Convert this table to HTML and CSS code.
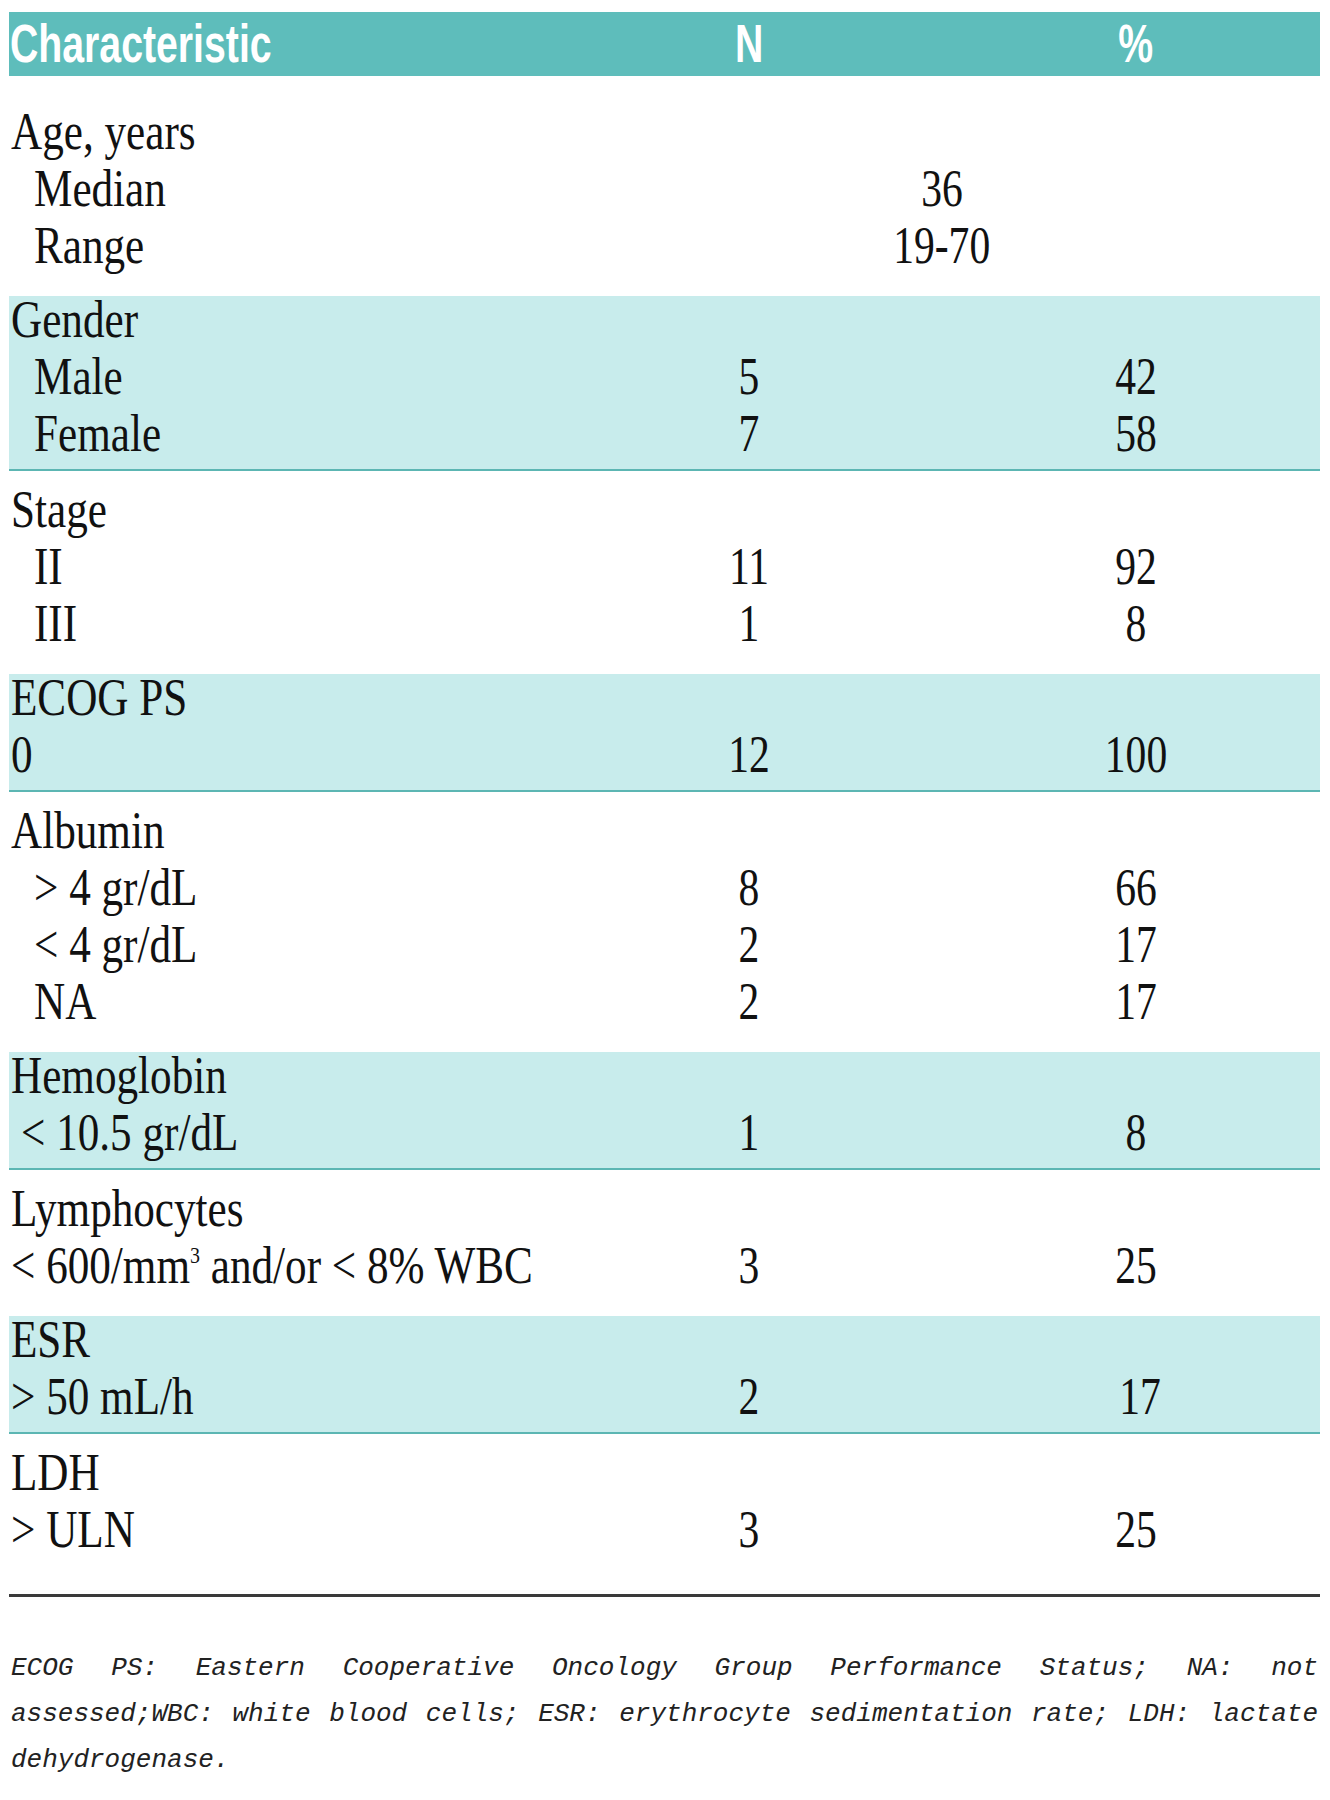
FILE: index.html
```html
<!DOCTYPE html>
<html lang="en">
<head>
<meta charset="utf-8">
<title>Patient characteristics</title>
<link rel="stylesheet" href="styles.css">
</head>
<body>
<div class="page">
  <div class="table">
    <div class="head">
      <div class="cell lab"><span class="sq">Characteristic</span></div>
      <div class="cell num"><span class="sq">N</span></div>
      <div class="cell pct"><span class="sq">%</span></div>
    </div>

    <div class="group plain first">
      <div class="row"><div class="cell lab"><span class="t">Age, years</span></div></div>
      <div class="row"><div class="cell lab ind"><span class="t">Median</span></div><div class="cell span"><span class="t">36</span></div></div>
      <div class="row"><div class="cell lab ind"><span class="t">Range</span></div><div class="cell span"><span class="t">19-70</span></div></div>
    </div>

    <div class="group band">
      <div class="row"><div class="cell lab"><span class="t">Gender</span></div></div>
      <div class="row"><div class="cell lab ind"><span class="t">Male</span></div><div class="cell num"><span class="t">5</span></div><div class="cell pct"><span class="t">42</span></div></div>
      <div class="row"><div class="cell lab ind"><span class="t">Female</span></div><div class="cell num"><span class="t">7</span></div><div class="cell pct"><span class="t">58</span></div></div>
    </div>

    <div class="group plain">
      <div class="row"><div class="cell lab"><span class="t">Stage</span></div></div>
      <div class="row"><div class="cell lab ind"><span class="t">II</span></div><div class="cell num"><span class="t">11</span></div><div class="cell pct"><span class="t">92</span></div></div>
      <div class="row"><div class="cell lab ind"><span class="t">III</span></div><div class="cell num"><span class="t">1</span></div><div class="cell pct"><span class="t">8</span></div></div>
    </div>

    <div class="group band">
      <div class="row"><div class="cell lab"><span class="t">ECOG PS</span></div></div>
      <div class="row"><div class="cell lab"><span class="t">0</span></div><div class="cell num"><span class="t">12</span></div><div class="cell pct"><span class="t">100</span></div></div>
    </div>

    <div class="group plain">
      <div class="row"><div class="cell lab"><span class="t">Albumin</span></div></div>
      <div class="row"><div class="cell lab ind"><span class="t">&gt; 4 gr/dL</span></div><div class="cell num"><span class="t">8</span></div><div class="cell pct"><span class="t">66</span></div></div>
      <div class="row"><div class="cell lab ind"><span class="t">&lt; 4 gr/dL</span></div><div class="cell num"><span class="t">2</span></div><div class="cell pct"><span class="t">17</span></div></div>
      <div class="row"><div class="cell lab ind"><span class="t">NA</span></div><div class="cell num"><span class="t">2</span></div><div class="cell pct"><span class="t">17</span></div></div>
    </div>

    <div class="group band">
      <div class="row"><div class="cell lab"><span class="t">Hemoglobin</span></div></div>
      <div class="row"><div class="cell lab ind-sm"><span class="t">&lt; 10.5 gr/dL</span></div><div class="cell num"><span class="t">1</span></div><div class="cell pct"><span class="t">8</span></div></div>
    </div>

    <div class="group plain">
      <div class="row"><div class="cell lab"><span class="t">Lymphocytes</span></div></div>
      <div class="row"><div class="cell lab"><span class="t">&lt; 600/mm<sup>3</sup> and/or &lt; 8% WBC</span></div><div class="cell num"><span class="t">3</span></div><div class="cell pct"><span class="t">25</span></div></div>
    </div>

    <div class="group band">
      <div class="row"><div class="cell lab"><span class="t">ESR</span></div></div>
      <div class="row"><div class="cell lab"><span class="t">&gt; 50 mL/h</span></div><div class="cell num"><span class="t">2</span></div><div class="cell pct nudge"><span class="t">17</span></div></div>
    </div>

    <div class="group plain">
      <div class="row"><div class="cell lab"><span class="t">LDH</span></div></div>
      <div class="row"><div class="cell lab"><span class="t">&gt; ULN</span></div><div class="cell num"><span class="t">3</span></div><div class="cell pct"><span class="t">25</span></div></div>
    </div>
  </div>

  <div class="rule"></div>

  <p class="note">ECOG PS: Eastern Cooperative Oncology Group Performance Status; NA: not assessed;WBC: white blood cells; ESR: erythrocyte sedimentation rate; LDH: lactate dehydrogenase.</p>
</div>
</body>
</html>
```

FILE: styles.css
```css
* {
  box-sizing: border-box;
}

body {
  margin: 0;
  background: #ffffff;
  color: #111111;
  font-family: "Liberation Serif", "Times New Roman", serif;
}

.page {
  width: 1311px;
  margin-left: 9px;
  padding-top: 12px;
}

.head,
.row {
  display: grid;
  grid-template-columns: 546px 388px 1fr;
}

.head {
  height: 64px;
  background: #5ebdbb;
  color: #ffffff;
  font-family: "Liberation Sans", Arial, sans-serif;
  font-weight: bold;
  font-size: 53px;
  line-height: 64px;
}

.row {
  height: 57px;
  font-size: 52px;
  line-height: 57px;
}

.cell {
  white-space: nowrap;
}

.lab {
  padding-left: 2px;
}

.head .lab {
  padding-left: 1px;
}

.lab.ind {
  padding-left: 25px;
}

.lab.ind-sm {
  padding-left: 12px;
}

.num,
.pct,
.span {
  text-align: center;
}

.pct,
.span {
  padding-left: 9px;
}

.pct.nudge {
  padding-left: 17px;
}

.span {
  grid-column: 2 / 4;
}

.t,
.sq {
  display: inline-block;
  transform-origin: 0 50%;
}

.t {
  transform: scaleX(0.8);
}

.lab .t {
  transform: scaleX(0.83);
}

.sq {
  transform: scaleX(0.74);
}

.num .t,
.pct .t,
.span .t,
.num .sq,
.pct .sq {
  transform-origin: 50% 50%;
}

sup {
  font-size: 24px;
  line-height: 0;
  vertical-align: 20px;
}

.group {
  display: flex;
  flex-direction: column;
}

.plain {
  padding: 10px 0 22px;
}

.plain.first {
  padding-top: 27px;
}

.band {
  background: #c8ecec;
  padding: 0 0 7px;
  border-bottom: 2px solid #5cb6b3;
}

.band > .row:first-child {
  margin-top: -5px;
}

.rule {
  height: 3px;
  margin-top: 14px;
  background: #3a3a3a;
}

.note {
  margin: 48px 0 0;
  padding: 0 2px;
  color: #222222;
  font-family: "Liberation Mono", "Courier New", monospace;
  font-style: italic;
  font-size: 26px;
  line-height: 46px;
  text-align: justify;
}
```
